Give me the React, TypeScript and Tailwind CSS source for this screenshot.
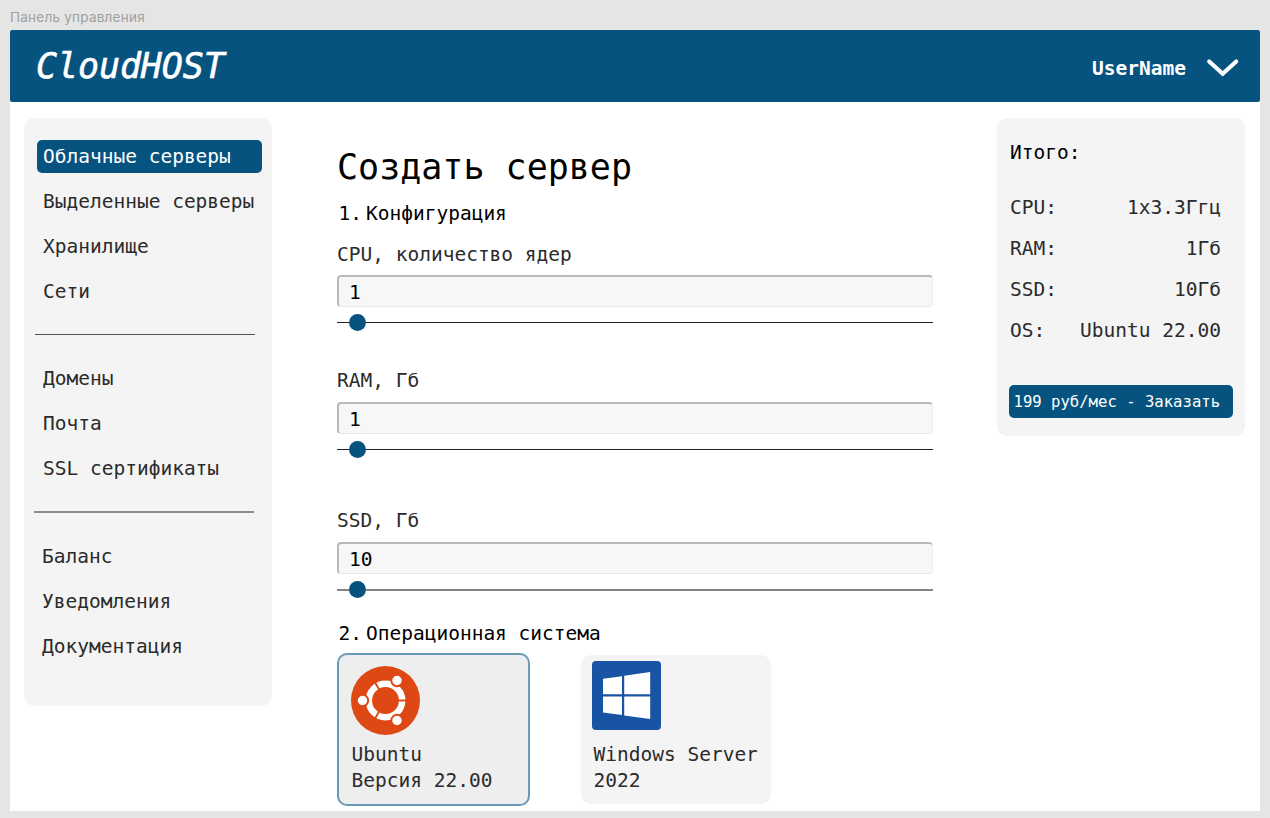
import React from "react";

type NavItem = { label: string; active?: boolean };

const navGroups: NavItem[][] = [
  [
    { label: "Облачные серверы", active: true },
    { label: "Выделенные серверы" },
    { label: "Хранилище" },
    { label: "Сети" },
  ],
  [{ label: "Домены" }, { label: "Почта" }, { label: "SSL сертификаты" }],
  [{ label: "Баланс" }, { label: "Уведомления" }, { label: "Документация" }],
];

const dividers = [
  "",
  "mt-[26px] mb-[27px] -ml-[2px] h-px w-[220px] bg-[#555555]",
  "mt-[26px] mb-[27px] -ml-[3px] h-[2px] w-[220px] bg-[#8c8c8c]",
];

const summary = [
  ["CPU:", "1x3.3Ггц"],
  ["RAM:", "1Гб"],
  ["SSD:", "10Гб"],
  ["OS:", "Ubuntu 22.00"],
];

function Header() {
  return (
    <header className="flex h-[72px] items-center justify-between rounded-[2px] bg-[#065380] pr-[20px] pl-[26px] text-white">
      <div className="text-[35px] leading-[40px] tracking-[-0.1px] italic [-webkit-text-stroke:0.6px_white]">
        CloudHOST
      </div>
      <div className="flex items-center gap-[20px] pt-[4px]">
        <span className="pt-[2px] text-[19.5px] leading-[24px] font-bold">UserName</span>
        <svg width="34" height="20" viewBox="0 0 34 20" fill="none">
          <path
            d="M3.2 3.4 L16.7 15.8 L30.2 3.4"
            stroke="white"
            strokeWidth="4.1"
            strokeLinecap="round"
          />
        </svg>
      </div>
    </header>
  );
}

function Sidebar() {
  return (
    <nav className="h-[588px] w-[248px] rounded-[10px] bg-[#f4f4f4] pt-[22px] pl-[13px]">
      {navGroups.map((group, g) => (
        <div key={g}>
          {g > 0 && <div className={dividers[g]} />}
          <ul className={g === 2 ? "-ml-px flex flex-col gap-[12px]" : "flex flex-col gap-[12px]"}>
            {group.map((item) => (
              <li
                key={item.label}
                className={
                  item.active
                    ? "h-[33px] w-[225px] rounded-[5px] bg-[#065380] pl-[6px] leading-[33px] text-white"
                    : "h-[33px] w-[225px] pl-[6px] leading-[33px] whitespace-nowrap"
                }
              >
                {item.label}
              </li>
            ))}
          </ul>
        </div>
      ))}
    </nav>
  );
}

type FieldProps = { label: string; value: string; compact?: boolean; thick?: boolean };

function Field({ label, value, compact, thick }: FieldProps) {
  const track = thick ? "h-[2px] bg-[#858585]" : "h-px bg-[#222222]";
  return (
    <div className="w-[596px]">
      <div className={compact ? "mb-[8px] leading-[24px]" : "mb-[9px] leading-[24px]"}>{label}</div>
      <div className="h-[32px] rounded-[4px] border-t-2 border-r border-b border-l-2 border-t-[#b9b9b9] border-r-[#ececec] border-b-[#e9e9e9] border-l-[#b9b9b9] bg-[#f7f7f7] pl-[10px] leading-[31px] text-black">
        {value}
      </div>
      <div className="mt-[7px] flex h-[17px] items-center">
        <div className={`w-[12px] ${track}`} />
        <div className="size-[17px] rounded-full bg-[#065380]" />
        <div className={`flex-1 ${track}`} />
      </div>
    </div>
  );
}

function UbuntuLogo() {
  return (
    <svg width="69" height="69" viewBox="0 0 69 69">
      <circle cx="34.5" cy="34.5" r="34.5" fill="#dd4814" />
      <circle cx="34.5" cy="34.5" r="16.7" fill="none" stroke="white" strokeWidth="6.5" />
      <g stroke="#dd4814" strokeWidth="1.9">
        <path d="M34.5 34.5 H56" />
        <path d="M34.5 34.5 L23.75 15.9" />
        <path d="M34.5 34.5 L23.75 53.1" />
      </g>
      <g fill="white" stroke="#dd4814" strokeWidth="1.9">
        <circle cx="11.5" cy="34.5" r="5.7" />
        <circle cx="46" cy="14.5" r="5.7" />
        <circle cx="46" cy="54.5" r="5.7" />
      </g>
    </svg>
  );
}

function WindowsLogo() {
  return (
    <svg width="69" height="69" viewBox="0 0 69 69">
      <rect width="69" height="69" rx="4" fill="#1853a4" />
      <g fill="white">
        <path d="M11 17.7 L30 15.2 V33.2 H11 Z" />
        <path d="M32.2 14.8 L58.2 11 V33.2 H32.2 Z" />
        <path d="M11 35.4 H30 V54 L11 51.5 Z" />
        <path d="M32.2 35.4 H58.2 V58 L32.2 54.4 Z" />
      </g>
    </svg>
  );
}

function Summary() {
  return (
    <aside className="h-[318px] w-[248px] rounded-[10px] bg-[#f4f4f4] pt-[23px] pl-[12px]">
      <div className="pl-px leading-[24px] text-black">Итого:</div>
      <dl className="mt-[31px] flex w-[212px] flex-col gap-[17px] pl-px">
        {summary.map(([name, value]) => (
          <div key={name} className="flex justify-between leading-[24px]">
            <dt>{name}</dt>
            <dd>{value}</dd>
          </div>
        ))}
      </dl>
      <button className="mt-[42px] block h-[33px] w-[224px] rounded-[5px] bg-[#065380] pl-[4.5px] text-left text-[15.6px] leading-[32px] whitespace-nowrap text-white">
        199 руб/мес - Заказать
      </button>
    </aside>
  );
}

export default function App() {
  return (
    <div className="h-[818px] w-[1270px] overflow-hidden bg-[#e5e5e5] px-[10px] pt-[8px] font-['DejaVu_Sans_Mono','Liberation_Mono',monospace] text-[19.5px] text-[#2b2b2b]">
      <div className="h-[22px] font-['Inter',sans-serif] text-[13.5px] leading-[18px] tracking-[0.24px] text-[#a0a0a0]">
        Панель управления
      </div>
      <div className="h-[781px] w-[1250px] bg-white">
        <Header />
        <div className="flex items-start pt-[16px] pl-[14px]">
          <Sidebar />
          <main className="ml-[65px] w-[596px] pt-[25px]">
            <h1 className="text-[35px] leading-[48px] text-black">Создать сервер</h1>
            <h2 className="mt-[11px] flex gap-[4px] pl-[1.5px] leading-[24px] text-black">
              <span>1.</span>
              <span>Конфигурация</span>
            </h2>
            <div className="mt-[17px]">
              <Field label="CPU, количество ядер" value="1" compact />
            </div>
            <div className="mt-[38px]">
              <Field label="RAM, Гб" value="1" />
            </div>
            <div className="mt-[51px]">
              <Field label="SSD, Гб" value="10" thick />
            </div>
            <h2 className="mt-[24px] flex gap-[4px] pl-[1.5px] leading-[24px] text-black">
              <span>2.</span>
              <span>Операционная система</span>
            </h2>
            <div className="mt-[7px] flex items-start gap-[51px] leading-[26px]">
              <div className="h-[153px] w-[193px] rounded-[10px] border-2 border-[#6a9ab8] bg-[#eeeeee] pt-[11px] pl-[12px]">
                <UbuntuLogo />
                <div className="mt-[7px] pl-[0.5px]">Ubuntu</div>
                <div className="pl-[0.5px]">Версия 22.00</div>
              </div>
              <div className="mt-[2px] h-[149px] w-[190px] rounded-[10px] bg-[#f4f4f4] pt-[6px] pl-[11px]">
                <WindowsLogo />
                <div className="mt-[12px] pl-[1.5px] whitespace-nowrap">Windows Server</div>
                <div className="pl-[1.5px]">2022</div>
              </div>
            </div>
          </main>
          <div className="ml-[64px]">
            <Summary />
          </div>
        </div>
      </div>
    </div>
  );
}
